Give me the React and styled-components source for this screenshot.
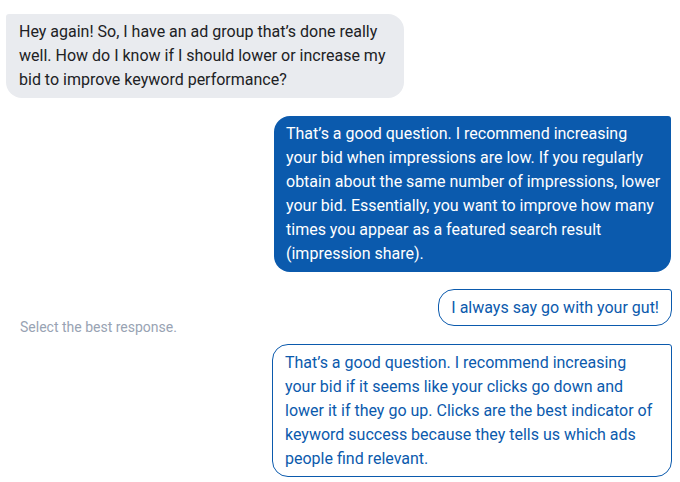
import React from 'react'
import styled, { createGlobalStyle } from 'styled-components'

const GlobalStyle = createGlobalStyle`
  body {
    margin: 0;
    background: #ffffff;
    font-family: Roboto, "Liberation Sans", Arial, sans-serif;
  }
`

const options = [
  'I always say go with your gut!',
  'That’s a good question. I recommend increasing your bid if it seems like your clicks go down and lower it if they go up. Clicks are the best indicator of keyword success because they tells us which ads people find relevant.',
]

function App() {
  return (
    <>
      <GlobalStyle />
      <Container>
        <Thread>
          <Bubble from="them">
            Hey again! So, I have an ad group that’s done really well. How do I
            know if I should lower or increase my bid to improve keyword
            performance?
          </Bubble>
          <Bubble from="me">
            That’s a good question. I recommend increasing your bid when
            impressions are low. If you regularly obtain about the same number
            of impressions, lower your bid. Essentially, you want to improve
            how many times you appear as a featured search result (impression
            share).
          </Bubble>
        </Thread>
        <Responses>
          <Prompt>Select the best response.</Prompt>
          <Options>
            {options.map((text) => (
              <Option key={text}>{text}</Option>
            ))}
          </Options>
        </Responses>
      </Container>
    </>
  )
}

const Container = styled.div`
  width: 680px;
  box-sizing: border-box;
  padding: 14px 8px 0 6px;
  display: flex;
  flex-direction: column;
  gap: 17px;
`

const Thread = styled.div`
  display: flex;
  flex-direction: column;
  gap: 18px;
`

const Bubble = styled.div`
  max-width: ${(p) => (p.from === 'me' ? '397px' : '398px')};
  box-sizing: border-box;
  padding: ${(p) => (p.from === 'me' ? '6px 10px 6px 12px' : '6px 12px 6px 13px')};
  font-size: 16px;
  line-height: 24px;
  align-self: ${(p) => (p.from === 'me' ? 'flex-end' : 'flex-start')};
  margin-right: ${(p) => (p.from === 'me' ? '1px' : '0')};
  background: ${(p) => (p.from === 'me' ? '#0b5aad' : '#e9ebef')};
  color: ${(p) => (p.from === 'me' ? '#ffffff' : '#202124')};
  border-radius: ${(p) => (p.from === 'me' ? '16px 3px 16px 16px' : '3px 16px 16px 16px')};
`

const Responses = styled.div`
  display: flex;
  justify-content: space-between;
  align-items: flex-start;
`

const Prompt = styled.span`
  margin: 30px 0 0 14px;
  font-size: 14px;
  line-height: 16px;
  color: #98a3b3;
`

const Options = styled.div`
  display: flex;
  flex-direction: column;
  align-items: flex-end;
  gap: 18px;
`

const Option = styled.button`
  max-width: 400px;
  box-sizing: border-box;
  padding: 6px 12px 5px;
  border: 1px solid #0b5aad;
  border-radius: 16px 3px 16px 16px;
  background: #ffffff;
  color: #0b5aad;
  font-family: inherit;
  font-size: 16px;
  line-height: 24px;
  text-align: left;
  cursor: pointer;
`

export default App
